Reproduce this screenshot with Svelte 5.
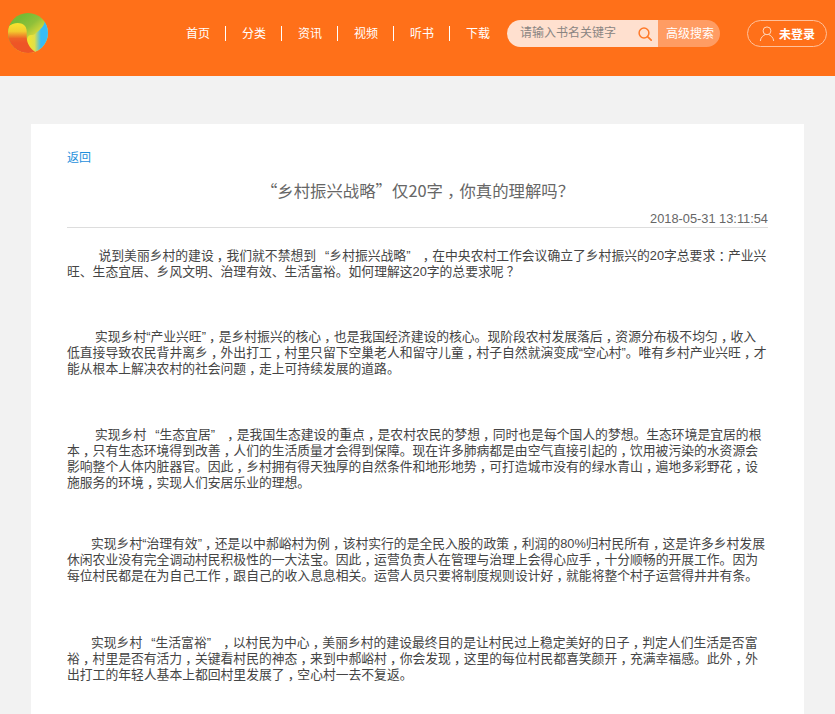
<script>
  const nav = ['首页', '分类', '资讯', '视频', '听书', '下载'];
  const split = (text) => text.split(/([，：？])/);
  const paragraphs = [
    { cls: 'i1', lines: [
      '说到美丽乡村的建设，我们就不禁想到 “乡村振兴战略” ，在中央农村工作会议确立了乡村振兴的20字总要求：产业兴',
      '旺、生态宜居、乡风文明、治理有效、生活富裕。如何理解这20字的总要求呢？'
    ] },
    { cls: 'i2', lines: [
      '实现乡村“产业兴旺”，是乡村振兴的核心，也是我国经济建设的核心。现阶段农村发展落后，资源分布极不均匀，收入',
      '低直接导致农民背井离乡，外出打工，村里只留下空巢老人和留守儿童，村子自然就演变成“空心村”。唯有乡村产业兴旺，才',
      '能从根本上解决农村的社会问题，走上可持续发展的道路。'
    ] },
    { cls: 'i2', lines: [
      '实现乡村 “生态宜居” ，是我国生态建设的重点，是农村农民的梦想，同时也是每个国人的梦想。生态环境是宜居的根',
      '本，只有生态环境得到改善，人们的生活质量才会得到保障。现在许多肺病都是由空气直接引起的，饮用被污染的水资源会',
      '影响整个人体内脏器官。因此，乡村拥有得天独厚的自然条件和地形地势，可打造城市没有的绿水青山，遍地多彩野花，设',
      '施服务的环境，实现人们安居乐业的理想。'
    ] },
    { cls: 'i3', lines: [
      '实现乡村“治理有效”，还是以中郝峪村为例，该村实行的是全民入股的政策，利润的80%归村民所有，这是许多乡村发展',
      '休闲农业没有完全调动村民积极性的一大法宝。因此，运营负责人在管理与治理上会得心应手，十分顺畅的开展工作。因为',
      '每位村民都是在为自己工作，跟自己的收入息息相关。运营人员只要将制度规则设计好，就能将整个村子运营得井井有条。'
    ] },
    { cls: 'i3', lines: [
      '实现乡村 “生活富裕” ，以村民为中心，美丽乡村的建设最终目的是让村民过上稳定美好的日子，判定人们生活是否富',
      '裕，村里是否有活力，关键看村民的神态，来到中郝峪村，你会发现，这里的每位村民都喜笑颜开，充满幸福感。此外，外',
      '出打工的年轻人基本上都回村里发展了，空心村一去不复返。'
    ] }
  ];
</script>

<div class="page">
  <header class="top">
    <svg class="logo" viewBox="0 0 40 40" width="40" height="40" aria-label="logo">
      <defs>
        <clipPath id="disc"><circle cx="20" cy="20" r="20" /></clipPath>
        <linearGradient id="g-green" gradientUnits="userSpaceOnUse" x1="14" y1="4" x2="30" y2="24">
          <stop offset="0" stop-color="#76bb35" />
          <stop offset="0.45" stop-color="#8fc03a" />
          <stop offset="1" stop-color="#eadf3a" />
        </linearGradient>
        <linearGradient id="g-blue" gradientUnits="userSpaceOnUse" x1="21" y1="0" x2="35" y2="0">
          <stop offset="0" stop-color="#f3e32e" />
          <stop offset="0.4" stop-color="#dfe04a" />
          <stop offset="0.85" stop-color="#38bcf4" />
          <stop offset="1" stop-color="#38bcf4" />
        </linearGradient>
        <linearGradient id="g-red" gradientUnits="userSpaceOnUse" x1="12" y1="12" x2="12" y2="30">
          <stop offset="0" stop-color="#f5e02f" />
          <stop offset="0.35" stop-color="#f3cc2e" />
          <stop offset="0.75" stop-color="#ee6227" />
          <stop offset="1" stop-color="#ee5526" />
        </linearGradient>
      </defs>
      <g clip-path="url(#disc)">
        <rect width="40" height="40" fill="url(#g-green)" />
        <path d="M37 6C37 13 32 17 28 20 26 22 25 22 23 22 20 22 19 25 19 29 19 34 23 38 27 41H41V6Z" fill="url(#g-blue)" />
        <path d="M0 14C5 9 14 9 17 13 20 17 18 22 19 27 20 33 24 37 30 41H0Z" fill="url(#g-red)" />
      </g>
    </svg>

    <nav class="nav">
      {#each nav as item}
        <span class="nav-item">{item}</span>
      {/each}
    </nav>

    <div class="search">
      <div class="search-field">
        <span class="placeholder">请输入书名关键字</span>
        <svg class="search-icon" viewBox="0 0 14 14" width="14" height="14" aria-hidden="true">
          <circle cx="6" cy="6" r="4.9" fill="none" stroke="#ff7a2a" stroke-width="1.5" />
          <path d="M9.8 9.8l3.4 3.4" stroke="#ff7a2a" stroke-width="1.7" stroke-linecap="round" />
        </svg>
      </div>
      <span class="search-btn">高级搜索</span>
    </div>

    <div class="login">
      <svg viewBox="0 0 18 18" width="16" height="17" aria-hidden="true">
        <circle cx="9" cy="6" r="4.4" fill="none" stroke="#ffd9c0" stroke-width="1.1" />
        <path d="M1.5 17C2 13 5 11 7 10.2M16.5 17C16 13 13 11 11 10.2" fill="none" stroke="#ffd9c0" stroke-width="1.1" stroke-linecap="round" />
      </svg>
      <span>未登录</span>
    </div>
  </header>

  <main class="card">
    <a class="back" href="#top">返回</a>
    <h1 class="title">“乡村振兴战略”仅20字<span class="punct">，</span>你真的理解吗？</h1>
    <div class="time">2018-05-31 13:11:54</div>
    <article class="body">
      {#each paragraphs as p}
        <div class="para {p.cls}">
          {#each p.lines as line}
            <div class="line">{#each split(line) as part, i}{#if i % 2}<span class="punct">{part}</span>{:else}{part}{/if}{/each}</div>
          {/each}
        </div>
      {/each}
    </article>
  </main>
</div>

<style>
  :global(body) {
    margin: 0;
    background: #f2f2f2;
  }
  .page {
    height: 100vh;
    overflow: hidden;
    font-family: "Liberation Sans", "Noto Sans CJK SC", sans-serif;
  }
  .top {
    height: 76px;
    background: #ff7019;
    display: flex;
    align-items: flex-start;
    color: #fff;
  }
  .logo {
    margin: 13px 0 0 8px;
    flex: none;
  }
  .nav {
    display: flex;
    margin: 26px 0 0 122px;
  }
  .nav-item {
    font-size: 12px;
    line-height: 17px;
    height: 15px;
    padding: 0 15px 0 16px;
    border-right: 1px solid #fff;
  }
  .nav-item:last-child {
    border-right: 0;
  }
  .search {
    display: flex;
    width: 213px;
    height: 27px;
    margin: 20px 0 0 2px;
    border-radius: 13.5px;
    overflow: hidden;
    font-size: 12px;
    line-height: 29px;
  }
  .search-field {
    width: 151px;
    background: #ffe0cf;
    display: flex;
    align-items: center;
    box-sizing: border-box;
    padding-left: 13px;
    color: #8a8582;
  }
  .search-icon {
    margin-left: 22px;
  }
  .search-btn {
    flex: 1;
    background: #ff9c63;
    padding-left: 8px;
  }
  .login {
    display: flex;
    align-items: center;
    gap: 4px;
    width: 80px;
    height: 27px;
    box-sizing: border-box;
    margin: 20px 0 0 27px;
    padding-left: 11px;
    border: 1px solid #ffc19b;
    border-radius: 13.5px;
    font-size: 12px;
    font-weight: 700;
  }
  .card {
    margin: 48px 31px 0;
    background: #fff;
    padding: 27px 36px 40px;
    min-height: 800px;
  }
  .back {
    display: block;
    font-size: 12px;
    line-height: 14px;
    color: #1e8fdc;
    text-decoration: none;
  }
  .title {
    margin: 13px 0 0;
    font-family: "Noto Sans CJK SC", sans-serif;
    font-size: 16.4px;
    line-height: 24px;
    font-weight: 400;
    text-align: center;
    color: #666;
  }
  .time {
    margin-top: 9px;
    font-size: 12.8px;
    line-height: 16px;
    text-align: right;
    color: #666;
    border-bottom: 1px solid #ddd;
  }
  .body {
    margin-top: 20px;
    font-size: 12.8px;
    line-height: 16px;
    color: #444;
    word-spacing: 5.5px;
  }
  .para {
    margin-bottom: 50px;
  }
  .para:nth-child(1) {
    margin-bottom: 49px;
  }
  .para:nth-child(3) {
    margin-bottom: 45px;
  }
  .para:nth-child(4) {
    margin-bottom: 51px;
  }
  .line {
    white-space: nowrap;
  }
  .punct {
    font-feature-settings: "halt";
    padding: 0 0.25em;
  }
  .i1 .line:first-child { padding-left: 31.5px; }
  .i2 .line:first-child { padding-left: 28px; }
  .i3 .line:first-child { padding-left: 24px; }
</style>
